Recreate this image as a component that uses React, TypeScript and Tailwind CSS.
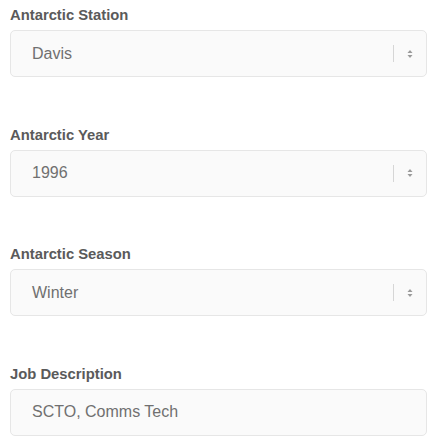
import React from "react";

function Arrows() {
  return (
    <svg width="6" height="10" viewBox="0 0 6 10" className="block">
      <path d="M3 1 L5.5 4 L0.5 4 Z" fill="#9a9a9a" />
      <path d="M3 9 L5.5 6 L0.5 6 Z" fill="#9a9a9a" />
    </svg>
  );
}

function Field({ label, value, select = true }: { label: string; value: string; select?: boolean }) {
  return (
    <div className="flex flex-col">
      <div className="h-[20px] leading-[20px] text-[14.8px] font-bold text-[#5a5a5a] mb-[5px] mt-px">{label}</div>
      <div className="h-[47px] w-[417px] rounded-[5px] border border-[#e6e6e6] bg-[#fafafa] flex items-center">
        <div className="flex-1 pl-[21px] text-[16px] text-[#707070]">{value}</div>
        {select && (
          <div className="flex items-center h-full">
            <div className="w-px h-[17px] bg-[#d6d6d6]" />
            <div className="w-[32px] flex justify-center">
              <Arrows />
            </div>
          </div>
        )}
      </div>
    </div>
  );
}

export default function App() {
  return (
    <div
      className="w-[440px] h-[442px] bg-white pl-[10px] pt-[4px] flex flex-col gap-[46.67px]"
      style={{ fontFamily: '"Liberation Sans", Arial, sans-serif' }}
    >
      <Field label="Antarctic Station" value="Davis" />
      <Field label="Antarctic Year" value="1996" />
      <Field label="Antarctic Season" value="Winter" />
      <Field label="Job Description" value="SCTO, Comms Tech" select={false} />
    </div>
  );
}
